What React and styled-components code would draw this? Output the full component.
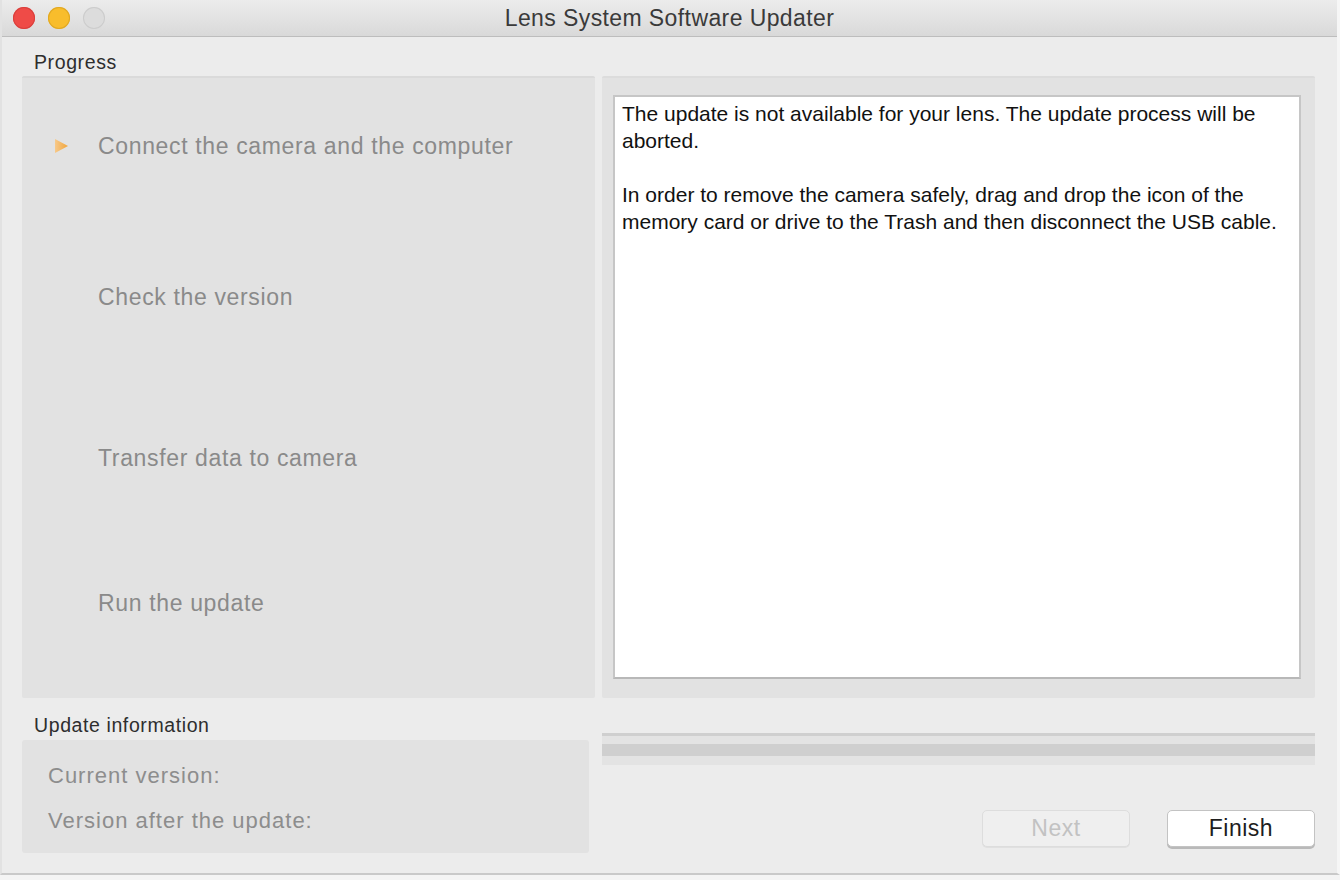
import React from "react";
import styled, { createGlobalStyle } from "styled-components";

const Global = createGlobalStyle`
  html, body { margin: 0; padding: 0; background: #f4f4f4; }
  body { font-family: "Liberation Sans", Arial, sans-serif; }
  #root { width: 1340px; height: 880px; }
`;

const Window = styled.div`
  width: 1340px;
  height: 875px;
  box-sizing: border-box;
  background: #ececec;
  border-left: 2px solid #e2e2e2;
  border-right: 3px solid #f6f6f6;
  border-bottom: 2px solid #c9c9c9;
  display: flex;
  flex-direction: column;
`;

const TitleBar = styled.div`
  height: 37px;
  flex: none;
  box-sizing: border-box;
  display: flex;
  align-items: center;
  position: relative;
  background: linear-gradient(#ececec, #d9d9d9);
  border-bottom: 1px solid #bdbdbd;
  padding-left: 11px;
`;

const Lights = styled.div`
  display: flex;
  gap: 13px;
`;

const Light = styled.span`
  width: 22px;
  height: 22px;
  border-radius: 50%;
  background: ${(p) => p.$c};
  box-shadow: inset 0 0 0 1px ${(p) => p.$b};
`;

const Title = styled.div`
  position: absolute;
  left: 0;
  right: 0;
  text-align: center;
  font-size: 23px;
  letter-spacing: 0.4px;
  color: #3a3a3a;
  pointer-events: none;
`;

const Content = styled.div`
  flex: 1;
  display: grid;
  grid-template-columns: 573px 713px;
  grid-template-rows: 25px 622px auto;
  column-gap: 7px;
  padding: 14px 0 0 20px;
`;

const SectionLabel = styled.div`
  font-size: 19.5px;
  letter-spacing: 0.6px;
  color: #2e2e2e;
  padding-left: 12px;
  line-height: 23px;
  grid-column: ${(p) => p.$col || "auto"};
`;

const StepsPanel = styled.div`
  background: #e2e2e2;
  border-top: 2px solid #dadada;
  border-radius: 2px;
  box-sizing: border-box;
  display: flex;
  flex-direction: column;
`;

const Step = styled.div`
  display: flex;
  align-items: center;
  height: 30px;
  margin-top: ${(p) => p.$mt}px;
  font-size: 23px;
  color: #8a8a8a;
  letter-spacing: 0.65px;
`;

const ArrowSlot = styled.span`
  width: 76px;
  display: flex;
  justify-content: flex-end;
  padding-right: 29px;
  box-sizing: border-box;
`;

const MessagePanel = styled.div`
  background: #e2e2e2;
  border-top: 2px solid #dcdcdc;
  border-radius: 2px;
  padding: 17px 14px 19px 11px;
  box-sizing: border-box;
  display: flex;
`;

const MessageBox = styled.div`
  flex: 1;
  background: #ffffff;
  border: 2px solid #c6c6c6;
  border-bottom-color: #b8b8b8;
  padding: 3px 7px;
  font-size: 21px;
  line-height: 27px;
  color: #111;
`;

const Para = styled.p`
  margin: 0 0 27px 0;
`;

const InfoColumn = styled.div`
  display: flex;
  flex-direction: column;
  padding-top: 16px;
`;

const InfoBox = styled.div`
  margin-top: 3px;
  width: 567px;
  height: 113px;
  box-sizing: border-box;
  background: #e2e2e2;
  border-radius: 3px;
  padding: 21px 0 0 26px;
  display: flex;
  flex-direction: column;
  gap: 16px;
`;

const InfoLine = styled.div`
  font-size: 22px;
  line-height: 29px;
  color: #8d8d8d;
  letter-spacing: 1px;
`;

const ActionColumn = styled.div`
  display: flex;
  flex-direction: column;
  padding-top: 35px;
`;

const ProgressTrack = styled.div`
  height: 32px;
  box-sizing: border-box;
  border-top: 3px solid #cfcfcf;
  background: #e3e3e3;
  padding-top: 8px;
`;

const ProgressFill = styled.div`
  height: 12px;
  background: #cfcfcf;
`;

const ButtonRow = styled.div`
  display: flex;
  justify-content: flex-end;
  gap: 37px;
  margin-top: 45px;
`;

const Button = styled.button`
  width: 148px;
  height: 37px;
  border-radius: 5px;
  font-family: "Liberation Sans", Arial, sans-serif;
  font-size: 23px;
  letter-spacing: 0.5px;
  padding: 0;
  cursor: default;
  background: ${(p) => (p.disabled ? "#efefef" : "#ffffff")};
  color: ${(p) => (p.disabled ? "#c2c2c2" : "#1e1e1e")};
  border: 1px solid ${(p) => (p.disabled ? "#dddddd" : "#c3c3c3")};
  box-shadow: ${(p) => (p.disabled ? "0 1px 0 #e0e0e0" : "0 2px 0 #b9b9b9")};
`;

const steps = [
  { label: "Connect the camera and the computer", mt: 53, active: true },
  { label: "Check the version", mt: 121 },
  { label: "Transfer data to camera", mt: 131 },
  { label: "Run the update", mt: 115 },
];

function Arrow() {
  return (
    <svg width="16" height="16" viewBox="0 0 16 16">
      <defs>
        <linearGradient id="ag" x1="0" x2="1" y1="0" y2="0">
          <stop offset="0" stopColor="#f7c98a" />
          <stop offset="1" stopColor="#f1a53a" />
        </linearGradient>
      </defs>
      <polygon points="2,1 15,8 2,15" fill="url(#ag)" />
    </svg>
  );
}

export default function App() {
  return (
    <>
      <Global />
      <Window>
        <TitleBar>
          <Lights>
            <Light $c="#ef4b47" $b="#d9403d" />
            <Light $c="#f8bd2c" $b="#e0a823" />
            <Light $c="#dcdcdc" $b="#cccccc" />
          </Lights>
          <Title>Lens System Software Updater</Title>
        </TitleBar>
        <Content>
          <SectionLabel $col="1 / 2">Progress</SectionLabel>
          <div style={{ gridColumn: "2 / 3" }} />
          <StepsPanel>
            {steps.map((s) => (
              <Step key={s.label} $mt={s.mt}>
                <ArrowSlot>{s.active ? <Arrow /> : null}</ArrowSlot>
                {s.label}
              </Step>
            ))}
          </StepsPanel>
          <MessagePanel>
            <MessageBox>
              <Para>
                The update is not available for your lens. The update process will be aborted.
              </Para>
              <Para>
                In order to remove the camera safely, drag and drop the icon of the memory card or drive to the Trash and then disconnect the USB cable.
              </Para>
            </MessageBox>
          </MessagePanel>
          <InfoColumn>
            <SectionLabel>Update information</SectionLabel>
            <InfoBox>
              <InfoLine>Current version:</InfoLine>
              <InfoLine>Version after the update:</InfoLine>
            </InfoBox>
          </InfoColumn>
          <ActionColumn>
            <ProgressTrack>
              <ProgressFill />
            </ProgressTrack>
            <ButtonRow>
              <Button disabled>Next</Button>
              <Button>Finish</Button>
            </ButtonRow>
          </ActionColumn>
        </Content>
      </Window>
    </>
  );
}
